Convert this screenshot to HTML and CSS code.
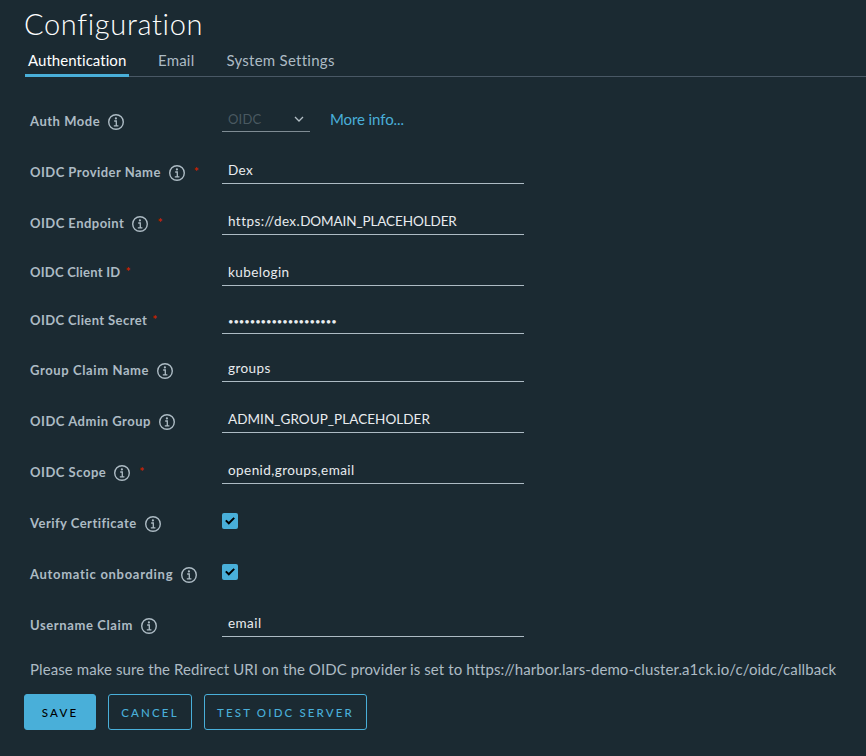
FILE: index.html
```html
<!DOCTYPE html>
<html lang="en">
<head>
<meta charset="utf-8">
<title>Configuration</title>
<link rel="stylesheet" href="styles.css">
</head>
<body>
<svg class="defs" width="0" height="0" aria-hidden="true">
  <symbol id="info" viewBox="0 0 16 16"><circle cx="8" cy="8" r="7.3" fill="none" stroke="currentColor" stroke-width="1.4"/><circle cx="7.9" cy="4.4" r="1.1" fill="currentColor"/><path d="M6.2 7h2.1v4.7M5.8 11.9h4.6" fill="none" stroke="currentColor" stroke-width="1.3"/></symbol>
  <symbol id="check" viewBox="0 0 16 16"><path d="M3.8 7.4l3 2.9 5.4-5.4" fill="none" stroke="#000" stroke-width="2"/></symbol>
</svg>
<main class="page">
  <h1 class="title">Configuration</h1>
  <nav class="tabs">
    <a class="tab active">Authentication</a>
    <a class="tab email">Email</a>
    <a class="tab system">System Settings</a>
  </nav>
  <form class="form">
    <div class="row"><div class="label">Auth Mode<svg class="info"><use href="#info"/></svg></div>
      <div class="mode"><div class="select"><span>OIDC</span><svg class="chevron" viewBox="0 0 10 7"><path d="M1 1l4 4 4-4"/></svg></div><a class="more">More info...</a></div></div>
    <div class="row"><div class="label mid">OIDC Provider Name<svg class="info"><use href="#info"/></svg><i class="req">*</i></div><div class="input">Dex</div></div>
    <div class="row"><div class="label mid">OIDC Endpoint<svg class="info"><use href="#info"/></svg><i class="req">*</i></div><div class="input">https://dex.<span class="caps">DOMAIN_PLACEHOLDER</span></div></div>
    <div class="row short"><div class="label narrow">OIDC Client ID<i class="req">*</i></div><div class="input">kubelogin</div></div>
    <div class="row short"><div class="label snug">OIDC Client Secret<i class="req">*</i></div><div class="input secret">••••••••••••••••••••</div></div>
    <div class="row"><div class="label wide">Group Claim Name<svg class="info"><use href="#info"/></svg></div><div class="input">groups</div></div>
    <div class="row"><div class="label">OIDC Admin Group<svg class="info"><use href="#info"/></svg></div><div class="input caps">ADMIN_GROUP_PLACEHOLDER</div></div>
    <div class="row"><div class="label">OIDC Scope<svg class="info"><use href="#info"/></svg><i class="req">*</i></div><div class="input">openid,groups,email</div></div>
    <div class="row"><div class="label mid">Verify Certificate<svg class="info"><use href="#info"/></svg></div><svg class="check"><use href="#check"/></svg></div>
    <div class="row"><div class="label wider">Automatic onboarding<svg class="info"><use href="#info"/></svg></div><svg class="check"><use href="#check"/></svg></div>
    <div class="row"><div class="label wide">Username Claim<svg class="info"><use href="#info"/></svg></div><div class="input">email</div></div>
  </form>
  <p class="note">Please make sure the Redirect URI on the OIDC provider is set to https://harbor.lars-demo-cluster.a1ck.io/c/oidc/callback</p>
  <div class="actions">
    <button class="btn primary">SAVE</button>
    <button class="btn cancel">CANCEL</button>
    <button class="btn test">TEST OIDC SERVER</button>
  </div>
</main>
</body>
</html>
```
FILE: styles.css
```css
* { box-sizing: border-box; }
body { margin: 0; background: #1b2a32; color: #adbbc4; font-family: Metropolis, Lato, "Open Sans", sans-serif; font-size: 15px; overflow: hidden; }
.defs { position: absolute; }
.page { height: 756px; padding: 8px 0 0 24px; }
.title { margin: 0; height: 36px; line-height: 32px; font-size: 29px; font-weight: 300; color: #fff; letter-spacing: .65px; }
.tabs { display: flex; height: 33px; gap: 24px; margin-left: 1px; box-shadow: inset 0 -1px #495865; }
.tab { height: 33px; padding: 0 3px; line-height: 33px; white-space: nowrap; letter-spacing: .05px; }
.active { width: 104px; color: #fff; box-shadow: inset 0 -3px #49afd9; }
.tab + .tab { padding: 0 5px; }
.tab + .email { letter-spacing: .2px; }
.tab + .system { padding-left: 3px; letter-spacing: .27px; }
.form { padding: 32px 0 0 6px; }
.row { display: grid; grid-template-columns: 192px 302px; height: 51px; align-items: start; }
.short { height: 48px; }
.label { display: flex; align-items: center; height: 23px; font-size: 13px; font-weight: 700; letter-spacing: .52px; white-space: nowrap; }
.short .label { height: 19px; }
.mid { letter-spacing: .47px; }
.narrow { letter-spacing: .24px; }
.snug { letter-spacing: .4px; }
.wide { letter-spacing: .61px; }
.wider { letter-spacing: .7px; }
.info { width: 16px; height: 16px; margin: 3px 0 0 8px; }
.req { margin-left: 9px; font-style: normal; font-size: 12px; color: #c92100; }
.short .req { margin-left: 5px; }
.input { height: 24px; padding-left: 6px; line-height: 20px; border-bottom: 1px solid #adbbc4; font-size: 13.5px; color: #e9ecef; letter-spacing: .43px; white-space: nowrap; }
.caps { letter-spacing: -.1px; }
.input.caps { letter-spacing: .05px; }
.secret { font-size: 9.5px; line-height: 23px; letter-spacing: -.08px; }
.mode { display: flex; gap: 20px; white-space: nowrap; }
.select { display: flex; justify-content: space-between; align-items: center; width: 88px; height: 23px; padding: 0 6px 2px; border-bottom: 1px solid #7f8c94; font-size: 13px; letter-spacing: .2px; color: #4a5961; }
.chevron { width: 10px; height: 7px; fill: none; stroke: #b3bfc6; stroke-width: 1.3; }
.more { color: #49afd9; line-height: 20px; letter-spacing: -.1px; }
.check { width: 16px; height: 16px; margin-top: 2px; border-radius: 2px; background: #49afd9; }
.note { margin: 0; padding-left: 6px; height: 30px; line-height: 11px; letter-spacing: .09px; white-space: nowrap; }
.actions { display: flex; gap: 12px; }
.btn { height: 36px; padding: 0; border: 1px solid #49afd9; border-radius: 3px; background: none; color: #49afd9; font: 500 11.5px Metropolis, Lato, sans-serif; letter-spacing: 2.15px; white-space: nowrap; }
.primary { width: 72px; background: #49afd9; color: #000; }
.cancel { width: 84px; }
.test { width: 163px; }
```
